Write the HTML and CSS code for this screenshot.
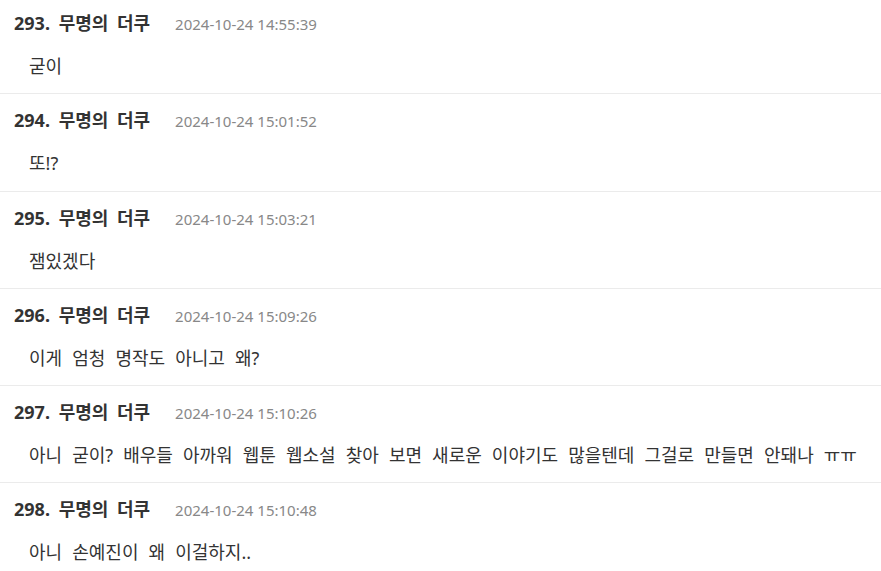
FILE: index.html
```html
<!DOCTYPE html>
<html lang="ko">
<head>
  <meta charset="UTF-8" />
  <meta name="viewport" content="width=device-width, initial-scale=1.0" />
  <title>댓글</title>
  <link rel="stylesheet" href="styles.css">
</head>
<body>
  <div class="comments">
    <div class="comment">
      <div class="comment-head"><span class="name">293. 무명의 더쿠</span><span class="date">2024-10-24 14:55:39</span></div>
      <div class="comment-body">굳이</div>
    </div>
    <div class="comment">
      <div class="comment-head"><span class="name">294. 무명의 더쿠</span><span class="date">2024-10-24 15:01:52</span></div>
      <div class="comment-body">또!?</div>
    </div>
    <div class="comment">
      <div class="comment-head"><span class="name">295. 무명의 더쿠</span><span class="date">2024-10-24 15:03:21</span></div>
      <div class="comment-body">잼있겠다</div>
    </div>
    <div class="comment">
      <div class="comment-head"><span class="name">296. 무명의 더쿠</span><span class="date">2024-10-24 15:09:26</span></div>
      <div class="comment-body">이게 엄청 명작도 아니고 왜?</div>
    </div>
    <div class="comment">
      <div class="comment-head"><span class="name">297. 무명의 더쿠</span><span class="date">2024-10-24 15:10:26</span></div>
      <div class="comment-body">아니 굳이? 배우들 아까워 웹툰 웹소설 찾아 보면 새로운 이야기도 많을텐데 그걸로 만들면 안돼나 ㅠㅠ</div>
    </div>
    <div class="comment">
      <div class="comment-head"><span class="name">298. 무명의 더쿠</span><span class="date">2024-10-24 15:10:48</span></div>
      <div class="comment-body">아니 손예진이 왜 이걸하지..</div>
    </div>
  </div>
</body>
</html>
```

FILE: styles.css
```css
body {
  margin: 0;
  background: #fff;
  color: #333;
  font-family: "Noto Sans", "Noto Sans CJK KR", sans-serif;
}
.comments {
  margin-top: -3px;
}
.comment {
  padding: 12px 14px 13.25px;
  border-bottom: 1px solid #ebebeb;
}
.comment-head {
  display: flex;
  align-items: baseline;
  line-height: 28px;
}
.name {
  font-size: 18px;
  font-weight: bold;
  color: #333;
  word-spacing: 4px;
}
.date {
  margin-left: 25px;
  font-size: 15px;
  color: #888;
}
.comment-body {
  margin-top: 14px;
  padding-left: 15px;
  font-size: 18px;
  line-height: 28px;
  word-spacing: 5.4px;
  white-space: nowrap;
}
```
